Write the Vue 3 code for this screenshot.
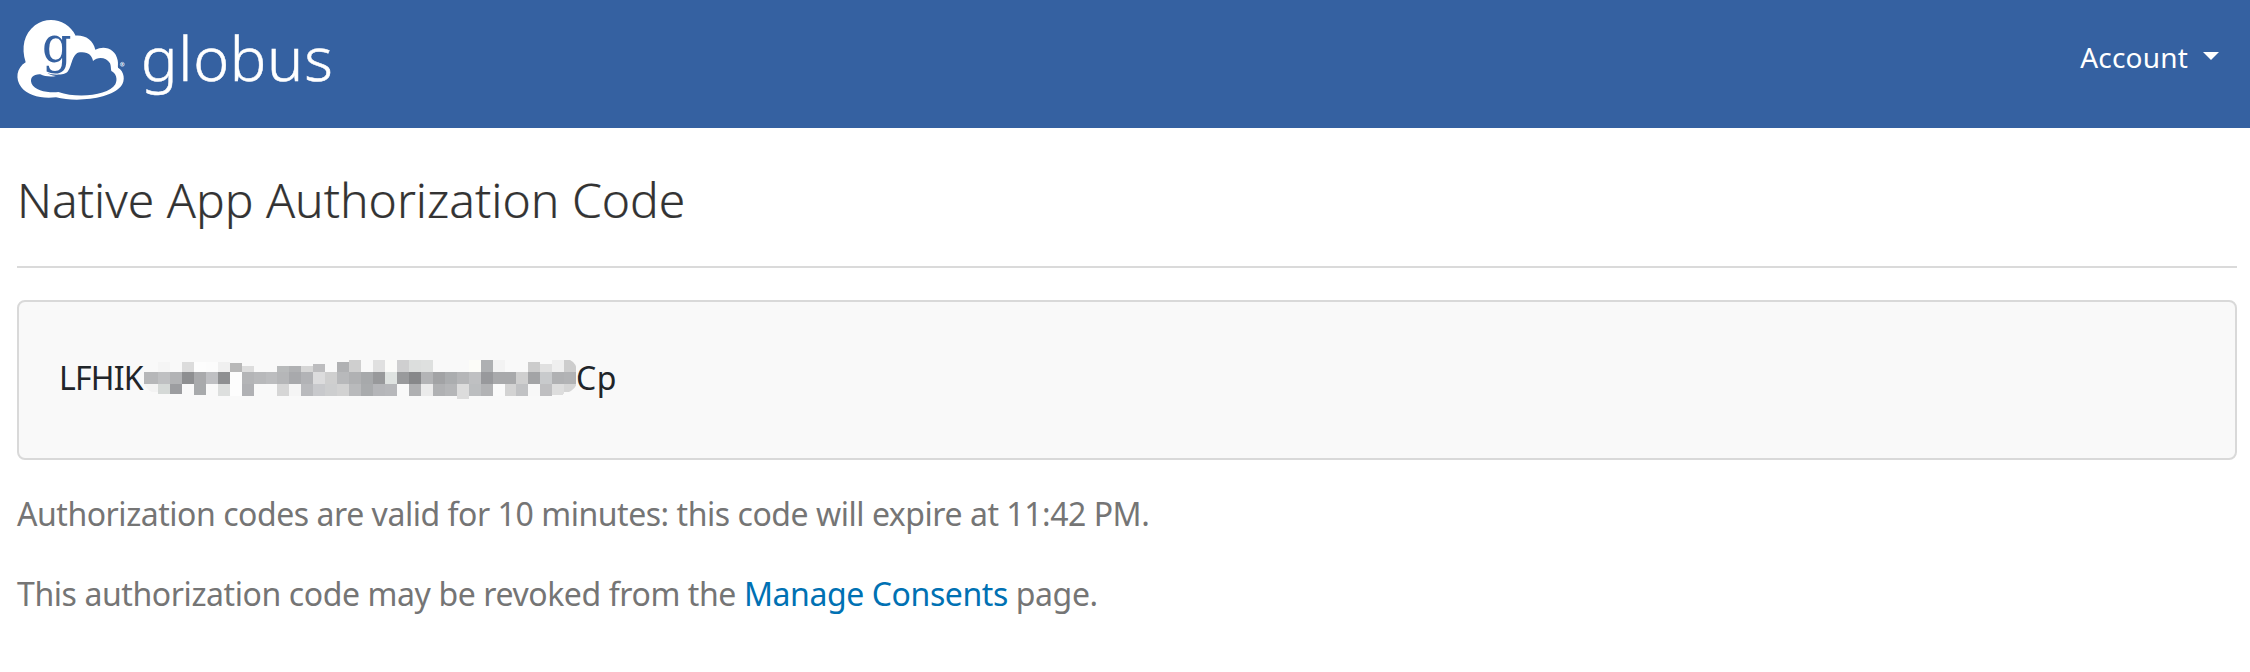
<script setup>
// Shades of the redacted middle of the code, one row of cells per line.
const top = 'f9f9f9 f5f5f5 f9f9f9 dcdcdc fdfdfd fcfcfc f0f0f0 b8b8b8 dddddd f9f9f9 f9f9f9 b8babb b0b1b3 d6d6d6 bdbdbf f9f9f9 b0b1b3 cfcfcf f9f9f9 e0e0e0 fbfbf9 cfcfd0 dcdedd dee0df f9f9f9 f9f9f9 f9f9f9 fcfcf8 aeb0b2 f3f3f3 f9f9f9 f9f9f9 cccccc e0e0e0 efefef cdcdcd'
const middle = 'b6b7b9 bfc0c2 b2b3b5 8e8f91 a9aaac bfc0c3 8f9092 fdfdfd b4b5b7 b8b9bb bcbdbf b5b6b8 a8a9ac b2b3b6 dcdcdd cfcfcf b8b9bb b0b1b3 a7a9ab 98999b dfe3e1 999a9c 87888a b3b4b6 a2a3a5 abadaf b5b6b8 bfc0c2 98999c a8a9ab a8a9ab cfcfcf a3a4a6 c8cacc b0b1b3 b2b3b5'
const bottom = 'f3f3f3 d5d9d7 9c9da0 f9f9f9 a8aaac f9f9f9 dddfde fdfdfd b0b1b4 f9f9f9 f9f9f9 d6d6d6 f5f5f5 b9babd c8c9cc cdcecf d2d2d2 b9babc a9abad b5b6b9 b7b8bb f9f9f9 afb0b2 ebebeb b0b1b3 b5b6b8 dcdcdc bcbec0 b2b3b5 fafafa d3d3d3 c1c2c4 f8f8f8 bfbfc1 dddddd d5d5d5'
const heads = { 7: 3, 8: 6, 11: 6, 12: 6, 13: 6, 14: 4, 16: 2, 32: 2, 33: 4 }
const tails = { 0: 8, 1: 10, 2: 10, 4: 11, 26: 15, 34: 11, 35: 8 }
const cells = [top, middle, bottom].flatMap((row, r) =>
  row.split(' ').map((c, i) => {
    const head = r === 0 ? (i < 7 ? 2 : heads[i] || 0) : 0
    const x = i === 0 ? -2 : Math.round(i * 11.95)
    return {
      fill: '#' + c,
      x,
      w: Math.round((i + 1) * 11.95) - x,
      y: r * 12 + head,
      h: r === 2 ? tails[i] || 12 : 12 - head
    }
  })
)
</script>

<template>
  <div class="page">
    <header class="bar">
      <a class="brand">
        <svg class="mark" viewBox="0 0 375 300" width="125" height="100">
          <path fill="#fff" d="M47 157C33 113 42 71 75 46C115 16 174 29 197 77C226 75 250 91 256 119C282 105 317 115 323 151C325 160 323 168 324 173C343 184 347 211 333 229C303 266 202 278 138 262C94 267 53 257 34 232C15 207 19 174 47 157Z" />
          <path fill="#3561a1" d="M172 186C186 172 185 129 210 127C234 124 247 137 249 153C263 139 289 141 300 160C303 166 302 175 304 183C318 190 324 207 316 223C297 256 204 267 145 246C114 249 74 242 65 221C58 203 71 192 91 193C103 199 123 202 138 198C124 196 118 193 112 188C130 198 166 194 172 186Z" />
          <text class="mark-g" transform="translate(96 157) scale(.9 1)" x="0" y="0">g</text>
          <circle cx="337" cy="163" r="6" fill="none" stroke="#fff" stroke-width="1.7" />
          <text class="mark-r" x="334" y="167">R</text>
        </svg>
        <span class="wordmark">globus</span>
      </a>
      <div class="account"><span>Account</span><i class="caret"></i></div>
    </header>
    <main>
      <h1><span class="title">Native App Authorization Code</span></h1>
      <div class="well">
        <span class="start">LFHIK</span>
        <svg class="mosaic" width="434" height="40" viewBox="-2 0 434 40">
          <clipPath id="ends"><path d="M4 0H424Q431 3 431 13V24Q427 32 417 34V40H12V34Q2 32 -2 24V12H4Z" /></clipPath>
          <g clip-path="url(#ends)" shape-rendering="crispEdges">
            <rect v-for="(c, i) in cells" :key="i" :x="c.x" :y="c.y" :width="c.w" :height="c.h" :fill="c.fill" />
          </g>
        </svg>
        <span class="end">Cp</span>
      </div>
      <p class="first">Authorization codes are valid for 10 minutes: this code will expire at 11:42 PM.</p>
      <p class="second">This authorization code may be revoked from the <a>Manage Consents</a> page.</p>
    </main>
  </div>
</template>

<style>
body { margin: 0; background: #fff; }
</style>

<style scoped>
.page { width: 2250px; height: 672px; overflow: hidden; background: #fff; font-family: "Noto Sans", "Open Sans", sans-serif; }
.bar { height: 128px; box-sizing: border-box; background: #3561a1; color: #fff; display: flex; justify-content: space-between; padding: 0 31px 0 10px; }
.brand { display: flex; color: #fff; }
.mark { margin-top: 10px; flex: none; }
.mark-g { font: 154px "DejaVu Serif", serif; fill: #3561a1; }
.mark-r { font: bold 9px "Liberation Sans", sans-serif; fill: #fff; }
.wordmark { font-size: 61px; font-weight: 300; line-height: 80px; margin: 18px 0 0 6px; letter-spacing: .7px; -webkit-text-stroke: .5px #fff; }
.account { display: flex; font-size: 28px; line-height: 40px; margin-top: 37px; letter-spacing: .2px; }
.caret { margin: 15px 0 0 15px; width: 0; height: 0; border: 8px solid transparent; border-top-color: #fff; border-bottom: 0; }
main { padding: 0 13px 0 17px; }
h1 { margin: 0 0 32px; height: 138px; border-bottom: 2px solid #dadada; color: #333; font-size: 48px; font-weight: 300; line-height: 64px; display: flex; align-items: flex-start; }
.title { margin-top: 40px; white-space: nowrap; -webkit-text-stroke: .2px #333; }
.well { box-sizing: border-box; height: 160px; border: 2px solid #d9d9d9; border-radius: 8px; background: #f9f9f9; color: #212529; font-size: 32px; line-height: 44px; padding: 54px 0 0 40px; display: flex; align-items: flex-start; }
.start { width: 85px; letter-spacing: -.8px; }
.end { margin-left: -2px; letter-spacing: .6px; }
.mosaic { flex: none; margin-top: 4px; }
p { margin: 30px 0 0; color: #757575; font-size: 32px; line-height: 48px; white-space: nowrap; letter-spacing: -.46px; }
p.second { margin-top: 32px; letter-spacing: -.41px; }
p a { color: #0071b3; }
</style>
